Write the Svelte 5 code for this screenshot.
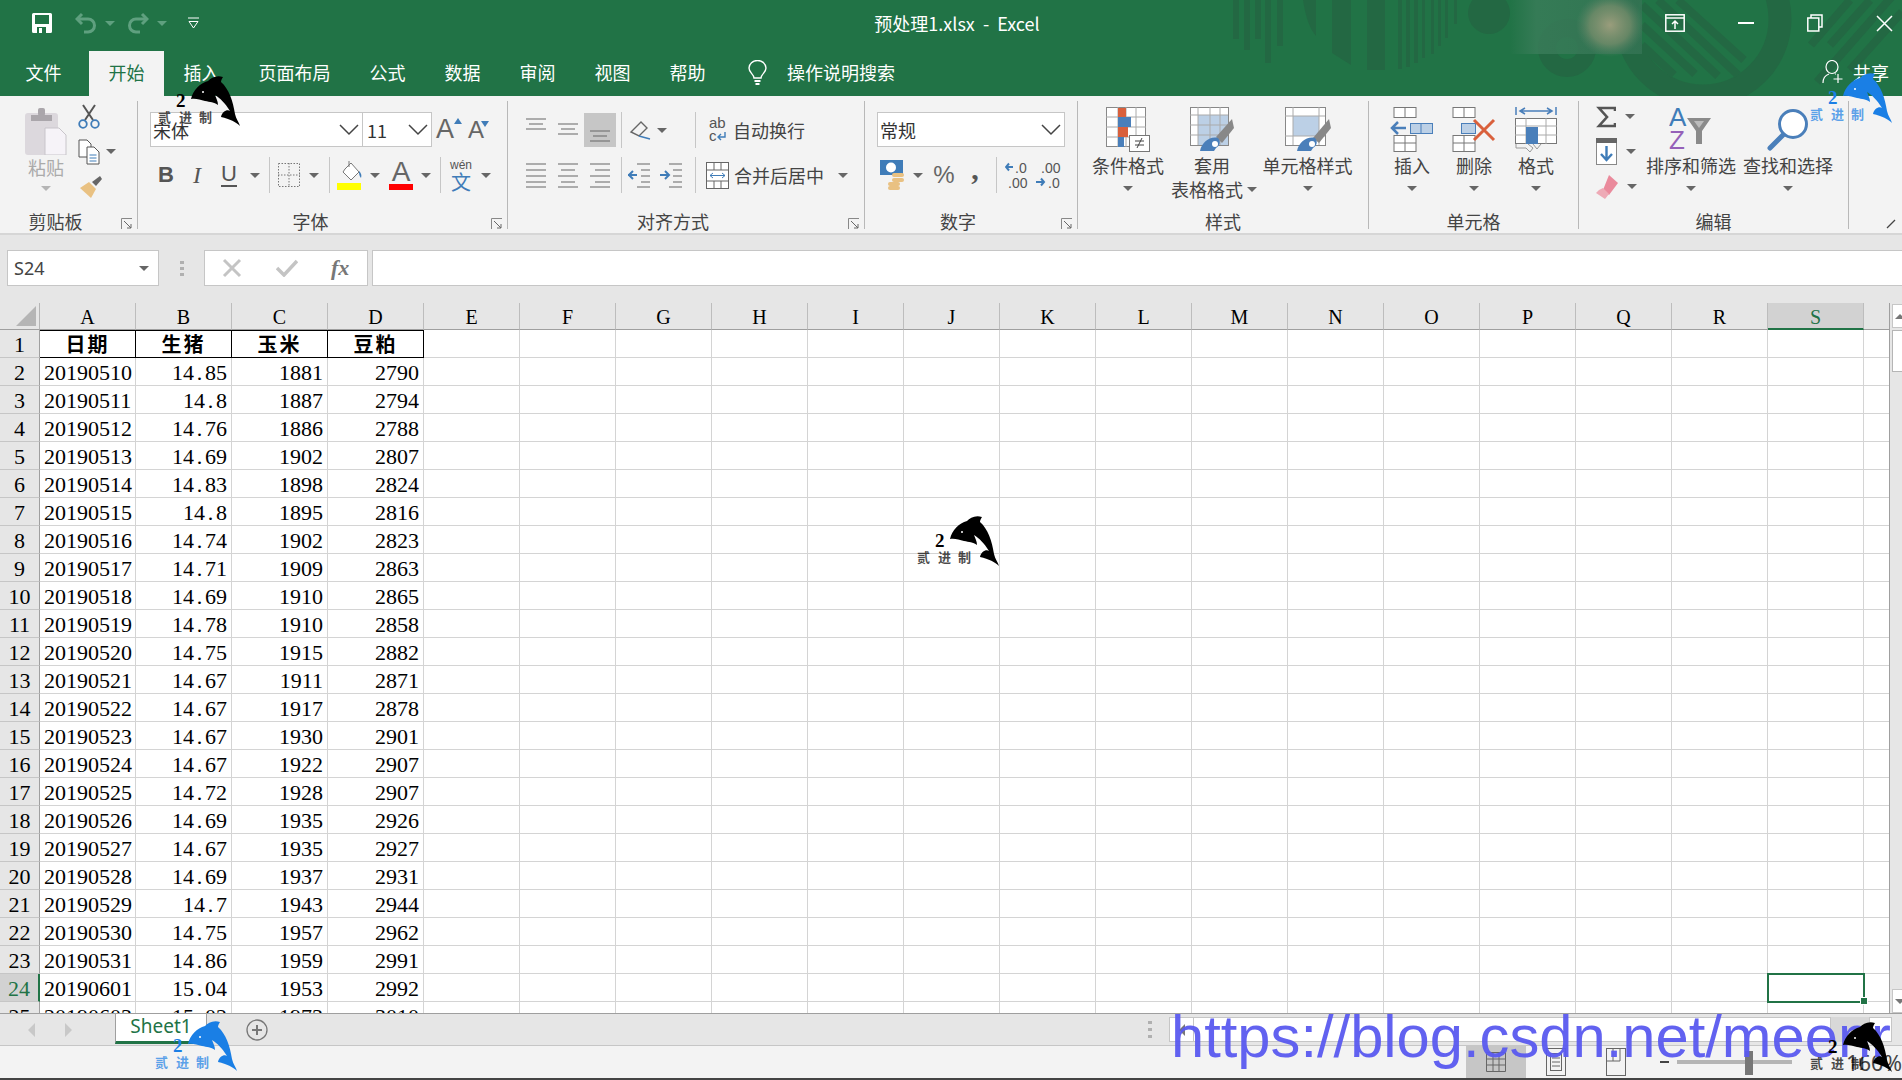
<script>
  const letters = 'ABCDEFGHIJKLMNOPQRS'.split('');
  const head = ['日期', '生猪', '玉米', '豆粕'];
  const data = [
    ['20190510', '14.85', '1881', '2790'],
    ['20190511', '14.8', '1887', '2794'],
    ['20190512', '14.76', '1886', '2788'],
    ['20190513', '14.69', '1902', '2807'],
    ['20190514', '14.83', '1898', '2824'],
    ['20190515', '14.8', '1895', '2816'],
    ['20190516', '14.74', '1902', '2823'],
    ['20190517', '14.71', '1909', '2863'],
    ['20190518', '14.69', '1910', '2865'],
    ['20190519', '14.78', '1910', '2858'],
    ['20190520', '14.75', '1915', '2882'],
    ['20190521', '14.67', '1911', '2871'],
    ['20190522', '14.67', '1917', '2878'],
    ['20190523', '14.67', '1930', '2901'],
    ['20190524', '14.67', '1922', '2907'],
    ['20190525', '14.72', '1928', '2907'],
    ['20190526', '14.69', '1935', '2926'],
    ['20190527', '14.67', '1935', '2927'],
    ['20190528', '14.69', '1937', '2931'],
    ['20190529', '14.7', '1943', '2944'],
    ['20190530', '14.75', '1957', '2962'],
    ['20190531', '14.86', '1959', '2991'],
    ['20190601', '15.04', '1953', '2992'],
    ['20190603', '15.02', '1973', '3010']
  ];
  const blanks = Array.from({ length: 16 });
  const tabs = ['插入', '页面布局', '公式', '数据', '审阅', '视图', '帮助'];
</script>

{#snippet caret()}<i class="caret"></i>{/snippet}

{#snippet chevron()}
  <svg width="20" height="12" viewBox="0 0 20 12"><path d="M1 1l9 9 9-9" fill="none" stroke="#444" stroke-width="1.5"/></svg>
{/snippet}

{#snippet launcher()}
  <svg class="launcher" width="12" height="12" viewBox="0 0 12 12"><path d="M.5 11V.5H11" fill="none" stroke="#888"/><path d="M3 3l7 7M10 6v4H6" fill="none" stroke="#666"/></svg>
{/snippet}

{#snippet lines(kind)}
  <svg width="22" height="26" viewBox="0 0 22 26" fill="none" stroke="#666" stroke-width="1.2">
    {#if kind === 'left'}<path d="M1 2h20M1 8h20M1 14h20M1 20h20M1 25h20"/>
    {:else if kind === 'center'}<path d="M1 2h20M4 8h14M1 14h20M4 20h14M1 25h20"/>
    {:else}<path d="M1 2h20M6 8h15M1 14h20M6 20h15M1 25h20"/>{/if}
  </svg>
{/snippet}

{#snippet mark(cls)}
  <div class="mark {cls}">
    <svg width="82" height="51" viewBox="0 0 82 51">
      <path d="M33 24C35 15 42 8 50 6C53 3 58 0 65 2C64 4 63 5 63 7C71 14 75 26 77 39C78 44 81 47 82 51C78 47 72 44 63 42C64 37 69 34 72 36C67 28 62 23 57 20C58 23 60 26 60 30C56 27 52 27 47 26C42 25 38 23 33 24Z" fill="currentColor"/>
      <circle cx="45" cy="17" r="1" fill="#fff"/>
      <text x="18" y="32" class="two">2</text>
      <text x="0" y="47" class="cn">贰</text>
      <text x="21" y="47" class="cn">进</text>
      <text x="41" y="47" class="cn">制</text>
    </svg>
  </div>
{/snippet}

{#snippet num(v)}
  {@const p = v.split('.')}
  {p[0]}{#if p[1]}<span class="dot">.</span>{p[1]}{/if}
{/snippet}

<div class="excel">
  <header class="top">
    <svg class="decor" width="702" height="96" viewBox="0 0 702 96">
      <defs>
        <linearGradient id="haze" x1="0" x2="1" y1="0" y2="0">
          <stop offset="0" stop-color="#3a7d5a" stop-opacity="0"/>
          <stop offset=".2" stop-color="#3a7d5a"/>
          <stop offset="1" stop-color="#357455"/>
        </linearGradient>
        <radialGradient id="glow">
          <stop offset="0" stop-color="#9a9d7c"/>
          <stop offset=".6" stop-color="#7d8f6e" stop-opacity=".7"/>
          <stop offset="1" stop-color="#5d8568" stop-opacity="0"/>
        </radialGradient>
      </defs>
      <g fill="#236843">
        <rect x="33" width="6" height="39"/><rect x="44" width="6" height="50"/><rect x="55" width="6" height="39"/>
        <rect x="65" width="6" height="63"/><rect x="77" width="6" height="46"/>
        <path d="M103 0h13v36Q107 26 103 0z"/><path d="M132 0h19v65l-19-12z"/><rect x="167" width="18" height="70"/>
        <rect x="198" width="4" height="69"/><rect x="206" width="4" height="67"/><rect x="214" width="4" height="63"/>
        <rect x="222" width="3" height="58"/><rect x="231" width="3" height="54"/><rect x="238" width="3" height="46"/>
        <rect x="245" width="3" height="38"/><rect x="254" width="3" height="24"/>
        <ellipse cx="289" cy="13" rx="21" ry="21"/>
      </g>
      <g fill="none" stroke="#236843">
        <circle cx="367" cy="48" r="20" stroke-width="18"/>
        <circle cx="503" cy="19" r="77" stroke-width="23"/>
        <g stroke-width="8">
          <path d="M458 0l80 75M442 5l76 71M442 25l53 49M442 45l32 30M478 0l66 60"/>
          <path d="M611 45L650 0M630 45L670 0M617 82L702-15M650 70L702 12"/>
        </g>
      </g>
      <rect x="310" width="132" height="54" fill="url(#haze)" opacity=".8"/>
      <ellipse cx="410" cy="25" rx="34" ry="32" fill="url(#glow)"/>
    </svg>

    <div class="titlebar">
      <div class="qat">
        <svg class="save" width="20" height="20" viewBox="0 0 20 20"><path d="M0 1.5A1.5 1.5 0 0 1 1.5 0h17A1.500 1.500 0 0 1 20 1.500v17a1.500 1.500 0 0 1-1.500 1.500h-17A1.500 1.500 0 0 1 0 18.500z" fill="#fff"/><rect x="3" y="2" width="14" height="9" fill="#217346"/><rect x="5" y="14" width="9" height="6" fill="#217346"/><rect x="7" y="15" width="3" height="5" fill="#fff"/></svg>
        <svg class="undo" width="22" height="22" viewBox="0 0 22 22" fill="none" stroke="#5fa07f" stroke-width="3"><path d="M7 2L2 7l5 5"/><path d="M2 7h11a6.500 6.500 0 0 1 0 13H9"/></svg>
        <i class="caret dim"></i>
        <svg class="redo" width="22" height="22" viewBox="0 0 22 22" fill="none" stroke="#5fa07f" stroke-width="3"><path d="M15 2l5 5-5 5"/><path d="M20 7H9a6.500 6.500 0 0 0 0 13h4"/></svg>
        <i class="caret dim"></i>
        <svg class="custom" width="13" height="12" viewBox="0 0 13 12" fill="none" stroke="#fff"><path d="M1 1h11M2 4.500h9L6.500 11z"/></svg>
      </div>
      <div class="doc">预处理1.xlsx&nbsp; - &nbsp;Excel</div>
      <div class="win">
        <svg width="20" height="18" viewBox="0 0 20 18" fill="none" stroke="#fff" stroke-width="1.500"><rect x=".8" y=".8" width="18.400" height="16.400"/><path d="M1 4h18M10 15V7M7 10l3-3 3 3"/></svg>
        <svg width="16" height="2" viewBox="0 0 16 2"><rect width="16" height="2" fill="#fff"/></svg>
        <svg width="16" height="18" viewBox="0 0 16 18" fill="none" stroke="#fff" stroke-width="1.500"><rect x=".8" y="4" width="11" height="13"/><path d="M4 4V1h11v12h-3"/></svg>
        <svg width="17" height="17" viewBox="0 0 17 17" stroke="#fff" stroke-width="1.500"><path d="M1 1l15 15M16 1L1 16"/></svg>
      </div>
    </div>

    <nav class="tabs">
      <span class="tab file">文件</span>
      <span class="tab active">开始</span>
      {#each tabs as t}<span class="tab">{t}</span>{/each}
      <svg class="bulb" width="19" height="25" viewBox="0 0 19 25" fill="none" stroke="#fff" stroke-width="1.400"><path d="M6 18c0-4-5-5-5-10a8.500 7.500 0 0 1 17 0c0 5-5 6-5 10z"/><path d="M6.500 21h6M7.500 24h4" stroke-width="1.800"/></svg>
      <span class="search">操作说明搜索</span>
      <div class="share">
        <svg width="22" height="24" viewBox="0 0 22 24" fill="none" stroke="#fff" stroke-width="1.200"><ellipse cx="10" cy="7" rx="6" ry="6.500"/><path d="M1 23c0-5 3-8 6-9M13 14h1M16 14v9M11.500 19h9"/></svg>
        <span>共享</span>
      </div>
    </nav>
  </header>

  <section class="ribbon">
    <div class="group g1">
      <div class="body clip">
        <div class="paste">
          <svg width="42" height="48" viewBox="0 0 42 48">
            <rect y="6" width="33" height="42" rx="3" fill="#dcd8dd"/>
            <path d="M6 8h21v6H6z" fill="#aaa6ab"/><rect x="13" y="1" width="7" height="8" rx="2" fill="#aaa6ab"/>
            <path d="M20 21h14l7 7v20H20z" fill="#f6f3f8" stroke="#c8c5ca"/>
          </svg>
          <span class="lbl disabled">粘贴</span>
          <i class="caret light"></i>
        </div>
        <div class="smalls">
          <div class="small">
            <svg width="22" height="26" viewBox="0 0 22 26" fill="none"><path d="M5 1l10 15M17 1L7 16" stroke="#555" stroke-width="2"/><circle cx="5" cy="20" r="3.800" stroke="#3f7cb8" stroke-width="1.800"/><circle cx="17" cy="20" r="3.800" stroke="#3f7cb8" stroke-width="1.800"/></svg>
          </div>
          <div class="small">
            <svg width="22" height="26" viewBox="0 0 22 26" fill="#fff" stroke="#555"><path d="M1 1h8l4 4v13H1z"/><path d="M9 8h7l5 5v12H9z"/><path d="M11.500 16h7M11.500 19h7M11.500 22h7" stroke="#3f7cb8"/></svg>
            <i class="caret"></i>
          </div>
          <div class="small">
            <svg width="24" height="24" viewBox="0 0 24 24"><path d="M14 7l8-6 2 3-6 7z" fill="#666"/><path d="M2 13l9-6 7 7-5 9z" fill="#e9c182"/></svg>
          </div>
        </div>
      </div>
      <div class="label">剪贴板</div>
      {@render launcher()}
    </div>

    <div class="group g2">
      <div class="body">
        <div class="row1 r-font">
          <div class="select font"><span>宋体</span>{@render chevron()}</div>
          <div class="select size"><span>11</span>{@render chevron()}</div>
          <span class="grow">A<svg width="8" height="6" viewBox="0 0 8 6"><path d="M4 0l4 6H0z" fill="#3f7cb8"/></svg></span>
          <span class="shrink">A<svg width="8" height="6" viewBox="0 0 8 6"><path d="M0 0h8L4 6z" fill="#3f7cb8"/></svg></span>
        </div>
        <div class="row2 r-fmt">
          <span class="b">B</span><span class="it">I</span><span class="u">U</span>{@render caret()}
          <i class="sep"></i>
          <svg width="22" height="24" viewBox="0 0 22 24" fill="none" stroke="#777" stroke-dasharray="1.500 1.500"><rect x=".5" y=".5" width="21" height="23"/><path d="M11 0v24M0 12h22"/></svg>
          {@render caret()}
          <i class="sep"></i>
          <svg width="26" height="30" viewBox="0 0 26 30"><path d="M8 9l6-6 8 9-8 8-8-8z" fill="#fff" stroke="#777"/><path d="M12 1v6" stroke="#777"/><path d="M22 11c2 2 3 4 2 7-2-2-2-5-2-7z" fill="#3f7cb8"/><rect x="0" y="23" width="24" height="7" fill="#ff0"/></svg>
          {@render caret()}
          <div class="colA"><span>A</span><i></i></div>
          {@render caret()}
          <i class="sep"></i>
          <div class="wen"><span>wén</span><b>文</b></div>
          {@render caret()}
        </div>
      </div>
      <div class="label">字体</div>
      {@render launcher()}
    </div>

    <div class="group g3">
      <div class="body">
        <div class="row1 r-al1">
          <svg width="20" height="14" viewBox="0 0 20 14" class="up" stroke="#666" stroke-width="1.200"><path d="M0 1h20M3 6h14M0 11h20"/></svg>
          <svg width="20" height="14" viewBox="0 0 20 14" stroke="#666" stroke-width="1.200"><path d="M0 1h20M3 6h14M0 11h20"/></svg>
          <div class="hl"><svg width="20" height="14" viewBox="0 0 20 14" stroke="#666" stroke-width="1.200"><path d="M0 1h20M3 6h14M0 11h20"/></svg></div>
          <i class="sep"></i>
          <svg width="24" height="22" viewBox="0 0 24 22" fill="none" stroke="#666" stroke-width="1.400"><path d="M2 13L12 3l6 6-8 8z"/><path d="M10 17l11 3" stroke="#3f7cb8"/></svg>
          {@render caret()}
          <span></span>
          <i class="sep"></i>
          <div class="cmd wrap">
            <svg width="18" height="26" viewBox="0 0 18 26"><text x="0" y="11" class="ab">ab</text><text x="0" y="24" class="ab">c</text><path d="M16 15v5h-6M12 17l-3 3 3 3" fill="none" stroke="#3f7cb8" stroke-width="1.400"/></svg>
            <span>自动换行</span>
          </div>
        </div>
        <div class="row2 r-al2">
          {@render lines('left')}
          {@render lines('center')}
          {@render lines('right')}
          <i class="sep"></i>
          <svg width="22" height="26" viewBox="0 0 22 26" fill="none" stroke="#666" stroke-width="1.200"><path d="M9 2h13M13 8h9M13 14h9M13 20h9M9 25h13"/><path d="M0 13h9M5 9l-4 4 4 4" stroke="#3f7cb8" stroke-width="2"/></svg>
          <svg width="22" height="26" viewBox="0 0 22 26" fill="none" stroke="#666" stroke-width="1.200"><path d="M9 2h13M13 8h9M13 14h9M13 20h9M9 25h13"/><path d="M0 13h9M5 9l4 4-4 4" stroke="#3f7cb8" stroke-width="2"/></svg>
          <i class="sep"></i>
          <div class="cmd merge">
            <svg width="23" height="27" viewBox="0 0 23 27" fill="#fff" stroke="#666"><rect x=".5" y=".5" width="22" height="26"/><path d="M0 8h23M0 19h23M8 0v8M15 0v8M8 19v8M15 19v8"/><path d="M4 13.500h15M7 11l-3 2.500L7 16M16 11l3 2.500L16 16" fill="none" stroke="#3f7cb8"/></svg>
            <span>合并后居中</span>
            {@render caret()}
          </div>
        </div>
      </div>
      <div class="label">对齐方式</div>
      {@render launcher()}
    </div>

    <div class="group g4">
      <div class="body">
        <div class="row1 r-num"><div class="select general"><span>常规</span>{@render chevron()}</div></div>
        <div class="row2 r-nf">
          <svg width="25" height="30" viewBox="0 0 25 30"><rect width="23" height="15" fill="#3f7cb8"/><ellipse cx="11" cy="7.500" rx="5" ry="5" fill="#fff"/><g fill="#e9c182"><rect x="12" y="13" width="12" height="4" rx="2"/><rect x="12" y="18" width="12" height="4" rx="2"/><rect x="8" y="22" width="12" height="4" rx="2"/><rect x="8" y="26" width="12" height="4" rx="2"/></g></svg>
          {@render caret()}
          <span class="pct">%</span>
          <span class="comma">,</span>
          <i class="sep"></i>
          <svg width="56" height="30" viewBox="0 0 56 30">
            <text x="10" y="13" class="dec">.0</text><text x="3" y="28" class="dec">.00</text>
            <path d="M1 7h7M4 3.500L1 7l3 3.500" fill="none" stroke="#3f7cb8" stroke-width="2"/>
            <text x="36" y="13" class="dec">.00</text><text x="43" y="28" class="dec">.0</text>
            <path d="M31 22h8M36 18.500l3 3.500-3 3.500" fill="none" stroke="#3f7cb8" stroke-width="2"/>
          </svg>
        </div>
      </div>
      <div class="label">数字</div>
      {@render launcher()}
    </div>

    <div class="group g5">
      <div class="body bigs">
        <div class="big w72">
          <svg width="44" height="45" viewBox="0 0 44 45">
            <rect x=".5" y=".5" width="39" height="39" fill="#fff" stroke="#888"/>
            <path d="M0 10h40M0 20h40M0 30h40M12 0v40M20 0v40M30 0v40" stroke="#aaa"/>
            <rect x="12" y="1" width="8" height="9" fill="#d9603c"/><rect x="12" y="10" width="13" height="10" fill="#4a7fba"/>
            <rect x="12" y="20" width="10" height="10" fill="#d9603c"/><rect x="12" y="30" width="6" height="10" fill="#4a7fba"/>
            <rect x="23.500" y="28.500" width="20" height="16" fill="#fff" stroke="#777"/>
            <path d="M29 34h9M29 38h9M36 31l-5 10" stroke="#444" fill="none"/>
          </svg>
          <span class="lbl">条件格式</span>
          <i class="caret"></i>
        </div>
        <div class="big w72 table">
          <svg class="shifted" width="44" height="45" viewBox="0 0 44 45">
            <rect x=".5" y=".5" width="38" height="38" fill="#fff" stroke="#888"/>
            <rect x="8" y="8" width="30" height="30" fill="#bcd0e6"/>
            <path d="M0 8h38M0 18h38M0 28h38M8 0v38M20 0v38M30 0v38" stroke="#aaa"/>
            <path d="M26 30L42 12l2 9-12 15z" fill="#888"/>
            <path d="M10 44c2-9 10-15 18-13 3 3 2 8-2 10l-2 3z" fill="#4a7fba"/><circle cx="25" cy="37" r="3" fill="#fff"/>
          </svg>
          <span class="lbl shifted">套用</span>
          <span class="lbl withcaret">表格格式<i class="caret"></i></span>
        </div>
        <div class="big w91 style">
          <svg width="46" height="45" viewBox="0 0 46 45">
            <rect x=".5" y=".5" width="40" height="38" fill="#fff" stroke="#888"/>
            <rect x="8" y="9" width="26" height="20" fill="#bcd0e6"/>
            <path d="M0 9h40M0 29h40M8 0v38M34 0v38" stroke="#aaa"/>
            <path d="M28 31L44 12l2 9-12 15z" fill="#888"/>
            <path d="M12 44c2-9 10-15 18-13 3 3 2 8-2 10l-2 3z" fill="#4a7fba"/><circle cx="27" cy="37" r="3" fill="#fff"/>
          </svg>
          <span class="lbl">单元格样式</span>
          <i class="caret"></i>
        </div>
      </div>
      <div class="label">样式</div>
    </div>

    <div class="group g6">
      <div class="body bigs">
        <div class="big w62">
          <svg width="44" height="45" viewBox="0 0 44 45" fill="#fff" stroke="#777">
            <rect x="4" y=".5" width="22" height="10"/><path d="M15 0v10"/>
            <rect x="20.500" y="16.500" width="22" height="10" fill="#bcd0e6" stroke="#4a7fba"/><path d="M31 16v10" stroke="#4a7fba"/>
            <rect x="4" y="28.500" width="22" height="16"/><path d="M15 28v16M4 36h22"/>
            <path d="M2 21h14M8 15l-6 6 6 6" fill="none" stroke="#4a7fba" stroke-width="2.500"/>
          </svg>
          <span class="lbl">插入</span>
          <i class="caret"></i>
        </div>
        <div class="big w62">
          <svg width="44" height="45" viewBox="0 0 44 45" fill="#fff" stroke="#777">
            <rect x="1" y=".5" width="22" height="10"/><path d="M12 0v10"/>
            <rect x="9.500" y="16.500" width="14" height="10" fill="#bcd0e6" stroke="#4a7fba"/>
            <rect x="1" y="28.500" width="22" height="16"/><path d="M12 28v16M1 36h22"/>
            <path d="M22 13l20 20M42 13L22 33" fill="none" stroke="#d9603c" stroke-width="3"/>
          </svg>
          <span class="lbl">删除</span>
          <i class="caret"></i>
        </div>
        <div class="big w62">
          <svg width="42" height="45" viewBox="0 0 42 45" fill="none">
            <path d="M1 0v8M41 0v8M5 4h32M10 1L5 4l5 3M32 1l5 3-5 3" stroke="#4a7fba" stroke-width="1.500"/>
            <rect x=".5" y="11.500" width="41" height="25" fill="#fff" stroke="#777"/>
            <path d="M0 19h42M0 28h42M11 11v26M31 11v26" stroke="#aaa"/>
            <rect x="11" y="20" width="12" height="17" fill="#4a7fba"/>
            <path d="M1 37v4h10l4 4 3-4-5-4M18 37l4 5 4-5" stroke="#999"/>
          </svg>
          <span class="lbl">格式</span>
          <i class="caret"></i>
        </div>
      </div>
      <div class="label">单元格</div>
    </div>

    <div class="group g7">
      <div class="body bigs">
        <div class="smalls edit">
          <div class="small">
            <svg width="20" height="22" viewBox="0 0 20 22" fill="none" stroke="#555" stroke-width="2.600"><path d="M19 5V2H3l8 9-8 9h16v-3"/></svg>
            <i class="caret"></i>
          </div>
          <div class="small">
            <svg width="21" height="27" viewBox="0 0 21 27"><rect x=".5" y=".5" width="20" height="26" fill="#fff" stroke="#888"/><rect width="21" height="5" fill="#666"/><path d="M10.500 8v13M5 16l5.500 6L16 16" fill="none" stroke="#3f7cb8" stroke-width="2.400"/></svg>
            <i class="caret"></i>
          </div>
          <div class="small">
            <svg width="22" height="24" viewBox="0 0 22 24"><path d="M13 0l9 8-9 12-6-5z" fill="#ea8a9c"/><path d="M7 13l6 6-4 5-9-6 3-3z" fill="#eeaab6"/></svg>
            <i class="caret"></i>
          </div>
        </div>
        <div class="big w90 sort">
          <svg width="44" height="45" viewBox="0 0 44 45">
            <text x="0" y="19" class="az a">A</text><text x="0" y="42" class="az z">Z</text>
            <path d="M18 11h24l-9 13v13h-6V24z" fill="#8a8a8a"/><path d="M25 14h10l-5 7z" fill="#bbb"/>
          </svg>
          <span class="lbl">排序和筛选</span>
          <i class="caret"></i>
        </div>
        <div class="big w90 find">
          <svg width="42" height="45" viewBox="0 0 42 45" fill="none">
            <circle cx="26" cy="17" r="13.500" fill="#fff" stroke="#4a7fba" stroke-width="3"/>
            <path d="M16 28L3 41" stroke="#4a7fba" stroke-width="5" stroke-linecap="round"/>
          </svg>
          <span class="lbl">查找和选择</span>
          <i class="caret"></i>
        </div>
      </div>
      <div class="label">编辑</div>
    </div>

    <svg class="collapse" width="14" height="10" viewBox="0 0 14 10"><path d="M1 9l8-8" fill="none" stroke="#444" stroke-width="1.300"/></svg>
  </section>

  <section class="formula">
    <div class="namebox"><span>S24</span><i class="caret"></i></div>
    <div class="grip"><i></i><i></i><i></i></div>
    <div class="fxbox">
      <svg width="20" height="20" viewBox="0 0 20 20" stroke="#c4c4c4" stroke-width="3"><path d="M2 2l16 16M18 2L2 18"/></svg>
      <svg width="22" height="18" viewBox="0 0 22 18" fill="none" stroke="#c4c4c4" stroke-width="3.500"><path d="M1 9l7 7L21 2"/></svg>
      <span class="fx">fx</span>
    </div>
    <div class="input"></div>
  </section>

  <section class="sheetarea">
    <div class="grid">
      <div class="corner"><i></i></div>
      {#each letters as l}
        <div class="colh" class:current={l === 'S'}>{l}</div>
      {/each}
      <div class="colh last"></div>

      <div class="rowh">1</div>
      {#each head as h}<div class="cell title">{h}</div>{/each}
      {#each blanks as _}<div class="cell"></div>{/each}

      {#each data as row, i}
        <div class="rowh" class:current={i === 22}>{i + 2}</div>
        <div class="cell txt">{row[0]}</div>
        <div class="cell txt right">{@render num(row[1])}</div>
        <div class="cell txt right">{row[2]}</div>
        <div class="cell txt right">{row[3]}</div>
        {#each blanks as _, j}
          <div class="cell" class:selected={i === 22 && j === 14}></div>
        {/each}
      {/each}
    </div>
    <div class="vscroll">
      <div class="sbtn"><i class="up"></i></div>
      <div class="thumb"></div>
      <div class="track"></div>
      <div class="sbtn"><i class="down"></i></div>
    </div>
  </section>

  <section class="sheetbar">
    <svg class="arrows" width="44" height="14" viewBox="0 0 44 14" fill="#c8c8c8"><path d="M7 0v14L0 7zM37 0v14l7-7z"/></svg>
    <div class="sheettab">Sheet1</div>
    <svg class="add" width="22" height="22" viewBox="0 0 22 22" fill="none" stroke="#777" stroke-width="1.300"><circle cx="11" cy="11" r="10"/><path d="M11 6v10M6 11h10" stroke-width="2"/></svg>
    <div class="bargrip"><i></i><i></i><i></i></div>
    <div class="hscroll">
      <div class="hbtn"><i></i></div>
      <div class="htrack"></div>
      <div class="hthumb"></div>
      <div class="hend"></div>
    </div>
  </section>

  <footer class="status">
    <div class="views">
      <div class="view on"><svg width="20" height="20" viewBox="0 0 20 20" fill="none" stroke="#666"><path d="M.5.500h19v19H.5zM7 0v20M13 0v20M0 7h20M0 13h20"/></svg></div>
      <div class="view"><svg width="20" height="28" viewBox="0 0 20 28" fill="none" stroke="#666"><rect x=".5" y=".5" width="19" height="27"/><rect x="4.500" y="5.500" width="11" height="17"/><path d="M6 10h8M6 14h8M6 18h8"/></svg></div>
      <div class="view"><svg width="20" height="28" viewBox="0 0 20 28" fill="none" stroke="#666"><rect x=".5" y=".5" width="19" height="27"/><path d="M0 13h14M14 0v13M7 0v13"/></svg></div>
    </div>
    <div class="zoomer">
      <i class="minus"></i>
      <div class="slider"><i></i></div>
      <span class="zoomval">160%</span>
    </div>
  </footer>

  <div class="url">https://blog.csdn.net/meenr</div>
  {@render mark('m-title')}
  {@render mark('m-share')}
  {@render mark('m-center')}
  {@render mark('m-tab')}
  {@render mark('m-status')}
</div>

<style>
  :global(body) {
    margin: 0;
    background: #fff;
  }

  .excel {
    position: relative;
    width: 1902px;
    height: 1080px;
    overflow: hidden;
    background: #f3f3f3;
    color: #444;
    font-family: "Noto Sans CJK SC", "Noto Sans", sans-serif;
    font-size: 18px;
  }

  i {
    display: block;
    font-style: normal;
  }

  .top {
    position: relative;
    height: 96px;
    background: #217346;
    color: #fff;
    overflow: hidden;
  }

  .decor {
    position: absolute;
    left: 1200px;
    top: 0;
  }

  .titlebar {
    position: relative;
    height: 50px;
    box-sizing: border-box;
    padding-bottom: 4px;
    display: grid;
    grid-template-columns: 1fr auto 1fr;
    align-items: center;
  }

  .qat {
    display: flex;
    align-items: center;
    padding-left: 32px;
  }

  .qat .undo { margin-left: 23px; }
  .qat .redo { margin-left: 12px; }
  .qat .caret { margin-left: 8px; }
  .qat .custom { margin-left: 20px; }

  .doc {
    padding-left: 12px;
    font-size: 18px;
    line-height: 46px;
    white-space: nowrap;
  }

  .win {
    display: flex;
    align-items: center;
    justify-content: flex-end;
    padding-right: 9px;
  }

  .win svg:nth-child(1) { margin-right: 53px; }
  .win svg:nth-child(2) { margin-right: 53px; }
  .win svg:nth-child(3) { margin-right: 53px; }

  .tabs {
    position: relative;
    height: 46px;
    display: flex;
    align-items: center;
    padding-left: 6px;
  }

  .tab {
    padding: 0 19.5px;
    line-height: 43px;
    height: 45px;
    margin-top: 1px;
    white-space: nowrap;
  }

  .tab.file { margin-right: 8px; }

  .tab.active {
    background: #f3f3f3;
    color: #217346;
  }

  .bulb { margin-left: 23px; margin-top: -2px; }
  .search { margin-left: 20px; margin-top: -2px; }

  .share {
    margin-left: auto;
    display: flex;
    align-items: center;
    gap: 9px;
    padding-right: 13px;
    margin-top: -2px;
  }

  .ribbon {
    position: relative;
    display: flex;
    height: 139px;
    box-sizing: border-box;
    padding-top: 5px;
    background: #f3f3f3;
    border-bottom: 2px solid #d6d6d6;
  }

  .group {
    position: relative;
    box-sizing: border-box;
    height: 128px;
    border-right: 1px solid #b8b8b8;
    flex: none;
  }

  .g1 { width: 138px; }
  .g2 { width: 370px; }
  .g3 { width: 357px; }
  .g4 { width: 213px; }
  .g5 { width: 291px; }
  .g6 { width: 210px; }
  .g7 { width: 270px; }

  .body {
    height: 108px;
    display: flow-root;
  }

  .label {
    height: 20px;
    line-height: 24px;
    text-align: center;
    white-space: nowrap;
    color: #444;
  }

  .g1 .label { padding-right: 26px; }
  .g2 .label { padding-right: 24px; }
  .g3 .label { padding-right: 26px; }
  .g4 .label { padding-right: 26px; }

  .launcher {
    position: absolute;
    right: 4px;
    bottom: -1px;
  }

  .clip {
    display: flex;
  }

  .paste {
    width: 42px;
    margin: 6px 0 0 25px;
    display: flex;
    flex-direction: column;
    align-items: center;
  }

  .lbl {
    line-height: 24px;
    white-space: nowrap;
    color: #444;
  }

  .lbl.disabled { color: #aaa; }

  .paste .caret { margin-top: 7px; }

  .smalls {
    margin: -2px 0 0 11px;
    display: flex;
    flex-direction: column;
  }

  .small {
    height: 35px;
    display: flex;
    align-items: center;
    gap: 6px;
  }

  .caret {
    width: 0;
    height: 0;
    flex: none;
    border-left: 5px solid transparent;
    border-right: 5px solid transparent;
    border-top: 5px solid #666;
  }

  .caret.dim { border-top-color: #5fa07f; }
  .caret.light { border-top-color: #b5b5b5; }

  .sep {
    width: 1px;
    height: 36px;
    background: #c6c6c6;
  }

  .row1 {
    height: 35px;
    margin-top: 11px;
    align-items: center;
  }

  .row2 {
    height: 36px;
    margin-top: 10px;
    display: grid;
    justify-items: center;
    align-items: center;
  }

  .r-font {
    display: flex;
    padding-left: 12px;
  }

  .select {
    box-sizing: border-box;
    height: 35px;
    background: #fff;
    border: 1px solid #c6c6c6;
    display: flex;
    align-items: center;
    justify-content: space-between;
    padding: 0 3px 0 2px;
    color: #333;
  }

  .select.font { width: 213px; }
  .select.size { width: 69px; border-left: 0; padding-left: 4px; }

  .grow, .shrink {
    position: relative;
    display: block;
    font-family: "Liberation Sans", sans-serif;
    color: #666;
  }

  .grow { font-size: 27px; margin-left: 4px; width: 32px; }
  .shrink { font-size: 24px; width: 24px; }

  .grow svg, .shrink svg {
    position: absolute;
    left: 18px;
    top: 4px;
  }

  .shrink svg { left: 13px; top: 5px; }

  .r-fmt {
    padding-left: 12px;
    grid-template-columns: 32px 30px 34px 18px 10px 30px 20px 10px 32px 18px 34px 16px 12px 30px 20px;
  }

  .b { font: bold 22px "Liberation Sans", sans-serif; color: #555; }
  .it { font: italic 24px "Liberation Serif", serif; color: #555; }
  .u {
    font: 22px/22px "Liberation Sans", sans-serif;
    color: #555;
    border-bottom: 2px solid #555;
  }

  .colA {
    width: 24px;
    text-align: center;
    font: 28px/24px "Liberation Sans", sans-serif;
    color: #666;
  }

  .colA i {
    height: 6px;
    background: #f00;
  }

  .wen {
    display: flex;
    flex-direction: column;
    align-items: center;
    color: #555;
  }

  .wen span {
    font: 12px/13px "Liberation Sans", sans-serif;
  }

  .wen b {
    font-weight: 400;
    font-size: 20px;
    line-height: 20px;
    color: #3f7cb8;
  }

  .r-al1 {
    display: grid;
    padding-left: 12px;
    grid-template-columns: 32px 32px 32px 10px 30px 12px 22px 10px 1fr;
    justify-items: center;
    align-items: center;
  }

  .r-al1 .up { margin-bottom: 10px; }

  .hl {
    width: 32px;
    height: 34px;
    background: #c6c6c6;
    display: flex;
    align-items: flex-end;
    justify-content: center;
  }

  .hl svg { margin-bottom: 3px; }

  .r-al2 {
    padding-left: 12px;
    grid-template-columns: 32px 32px 32px 10px 26px 38px 10px 1fr;
  }

  .cmd {
    justify-self: start;
    display: flex;
    align-items: center;
    white-space: nowrap;
  }

  .wrap { padding-left: 9px; gap: 6px; }
  .merge { padding-left: 6px; gap: 5px; }
  .merge .caret { margin-left: 9px; }

  .ab {
    font: 15px "Liberation Sans", sans-serif;
    fill: #555;
  }

  .r-num { padding-left: 12px; }

  .select.general { width: 188px; }

  .r-nf {
    padding-left: 12px;
    grid-template-columns: 30px 22px 30px 32px 10px 64px;
  }

  .pct {
    font: 24px "Liberation Sans", sans-serif;
    color: #666;
  }

  .comma {
    font: bold 30px/20px "Liberation Serif", serif;
    color: #555;
    padding-bottom: 12px;
  }

  .dec {
    font: 14px "Liberation Sans", sans-serif;
    fill: #555;
  }

  .bigs {
    display: flex;
  }

  .big {
    display: flex;
    flex-direction: column;
    align-items: center;
    padding-top: 6px;
    flex: none;
  }

  .big svg { height: 45px; flex: none; margin-bottom: 1px; }
  .big > .caret { margin-top: 9px; }

  .w72 { width: 72px; }
  .w91 { width: 91px; }
  .w62 { width: 62px; }
  .w90 { width: 90px; }

  .g5 .big:first-child { margin-left: 14px; }
  .table { margin-left: 7px; }
  .style { margin-left: 19px; }

  .shifted { margin-left: 10px; }

  .g6 .bigs { padding-left: 12px; }

  .withcaret {
    position: relative;
  }

  .withcaret .caret {
    position: absolute;
    right: -14px;
    top: 10px;
  }

  .smalls.edit {
    width: 50px;
    margin: -2px 0 0 17px;
    flex: none;
  }

  .edit .small { gap: 9px; }

  .find { margin-left: 7px; }

  .az {
    font: 26px "Liberation Sans", sans-serif;
  }

  .az.a { fill: #3f7cb8; }
  .az.z { fill: #9560b8; }

  .collapse {
    position: absolute;
    right: 2px;
    bottom: 4px;
  }

  .formula {
    height: 68px;
    box-sizing: border-box;
    padding-top: 15px;
    background: #e6e6e6;
    display: flex;
    align-items: flex-start;
  }

  .namebox {
    box-sizing: border-box;
    width: 152px;
    height: 36px;
    margin-left: 7px;
    background: #fff;
    border: 1px solid #c6c6c6;
    display: flex;
    align-items: center;
    justify-content: space-between;
    padding: 0 9px 0 6px;
    font: 18px "Noto Sans", sans-serif;
  }

  .grip {
    width: 45px;
    height: 36px;
    display: flex;
    flex-direction: column;
    align-items: center;
    justify-content: center;
    gap: 3px;
  }

  .grip i, .bargrip i {
    width: 4px;
    height: 3px;
    background: #b0b0b0;
  }

  .fxbox {
    box-sizing: border-box;
    width: 164px;
    height: 36px;
    background: #fff;
    border: 1px solid #c6c6c6;
    display: flex;
    align-items: center;
    padding-left: 17px;
    gap: 34px;
  }

  .fx {
    font: italic bold 22px "Liberation Serif", serif;
    color: #777;
    margin-left: -1px;
  }

  .input {
    flex: 1;
    height: 36px;
    box-sizing: border-box;
    margin-left: 4px;
    background: #fff;
    border: 1px solid #c6c6c6;
    border-right: 0;
  }

  .sheetarea {
    display: flex;
    height: 710px;
    background: #e6e6e6;
    overflow: hidden;
  }

  .grid {
    width: 1890px;
    flex: none;
    background: #fff;
    display: grid;
    grid-template-columns: 40px repeat(19, 96px) 26px;
    grid-auto-rows: 28px;
    grid-template-rows: 27px;
    align-content: start;
    overflow: hidden;
    margin-right: 2px;
    border-right: 1px solid #9f9f9f;
    box-sizing: border-box;
    font-family: "Liberation Serif", "Noto Sans CJK SC", serif;
    color: #000;
  }

  .corner {
    background: #e6e6e6;
    box-sizing: border-box;
    border-right: 1px solid #b5b5b5;
    border-bottom: 1px solid #9f9f9f;
    height: 27px;
    display: flex;
    justify-content: flex-end;
    align-items: flex-end;
    padding: 0 3px 3px 0;
  }

  .corner i {
    width: 0;
    height: 0;
    border-left: 20px solid transparent;
    border-bottom: 20px solid #b5b5b5;
  }

  .colh {
    box-sizing: border-box;
    background: #e6e6e6;
    border-right: 1px solid #bdbdbd;
    border-bottom: 1px solid #9f9f9f;
    text-align: center;
    font-size: 20px;
    line-height: 29px;
  }

  .colh.current {
    background: #d2d2d2;
    color: #217346;
    border-bottom: 2px solid #217346;
  }

  .colh.last {
    border-right: 0;
  }

  .rowh {
    box-sizing: border-box;
    background: #e6e6e6;
    border-right: 1px solid #9f9f9f;
    border-bottom: 1px solid #c6c6c6;
    text-align: center;
    font-size: 22px;
    line-height: 30px;
  }

  .rowh.current {
    background: #d2d2d2;
    color: #217346;
    border-right: 2px solid #217346;
  }

  .cell {
    box-sizing: border-box;
    border-right: 1px solid #d4d4d4;
    border-bottom: 1px solid #d4d4d4;
    position: relative;
    white-space: nowrap;
  }

  .txt {
    font-size: 22px;
    line-height: 30px;
    padding: 0 4px;
  }

  .right { text-align: right; }

  .dot {
    display: inline-block;
    width: 11px;
    text-align: center;
  }

  .title {
    border-right: 1px solid #000;
    border-bottom: 1px solid #000;
    box-shadow: inset 0 1px 0 #000;
    font: bold 20px/28px "Noto Sans CJK SC", sans-serif;
    letter-spacing: 2px;
    text-align: center;
    color: #000;
  }

  .selected {
    outline: 2px solid #217346;
    outline-offset: -1px;
    z-index: 2;
  }

  .selected::after {
    content: "";
    position: absolute;
    right: -4px;
    bottom: -3px;
    width: 6px;
    height: 6px;
    background: #217346;
    outline: 1px solid #fff;
  }

  .vscroll {
    width: 10px;
    flex: none;
    display: flex;
    flex-direction: column;
    margin-top: 1px;
  }

  .sbtn {
    height: 24px;
    background: #fff;
    border: 1px solid #c6c6c6;
    border-right: 0;
    box-sizing: border-box;
    display: flex;
    align-items: center;
    padding-left: 2px;
  }

  .sbtn i {
    border-left: 5px solid transparent;
    border-right: 5px solid transparent;
  }

  .sbtn .up { border-bottom: 5px solid #777; }
  .sbtn .down { border-top: 5px solid #777; }

  .thumb {
    height: 42px;
    margin-top: 2px;
    background: #fff;
    border: 1px solid #b5b5b5;
    border-right: 0;
    box-sizing: border-box;
  }

  .track { flex: 1; }

  .sheetbar {
    height: 33px;
    box-sizing: border-box;
    background: #e6e6e6;
    border-top: 1px solid #9f9f9f;
    border-bottom: 1px solid #c6c6c6;
    display: flex;
    align-items: center;
  }

  .arrows { margin-left: 28px; flex: none; }

  .sheettab {
    box-sizing: border-box;
    width: 92px;
    height: 30px;
    margin-left: 43px;
    align-self: flex-start;
    background: #fff;
    border-left: 1px solid #9f9f9f;
    border-right: 1px solid #9f9f9f;
    border-bottom: 3px solid #217346;
    color: #217346;
    font-size: 19px;
    line-height: 24px;
    text-align: center;
    font-family: "Noto Sans", sans-serif;
  }

  .add { margin-left: 39px; flex: none; }

  .bargrip {
    margin-left: 880px;
    display: flex;
    flex-direction: column;
    gap: 4px;
  }

  .hscroll {
    margin-left: 17px;
    width: 723px;
    height: 25px;
    display: flex;
    flex: none;
  }

  .hbtn {
    width: 25px;
    background: #fff;
    box-sizing: border-box;
    border: 1px solid #c6c6c6;
    display: flex;
    align-items: center;
    justify-content: center;
  }

  .hbtn i {
    border-top: 6px solid transparent;
    border-bottom: 6px solid transparent;
    border-right: 6px solid #777;
  }

  .htrack {
    width: 637px;
    background: #fff;
    box-sizing: border-box;
    border: 1px solid #c6c6c6;
    border-left: 0;
  }

  .hthumb { width: 38px; background: #d8d8d8; }

  .hend {
    width: 23px;
    background: #fff;
    box-sizing: border-box;
    border: 1px solid #c6c6c6;
  }

  .status {
    height: 34px;
    box-sizing: border-box;
    background: #f3f3f3;
    border-bottom: 2px solid #444;
    display: flex;
    align-items: stretch;
  }

  .views {
    margin-left: 1466px;
    display: flex;
  }

  .view {
    width: 60px;
    display: flex;
    align-items: center;
    justify-content: center;
  }

  .view.on { background: #c6c6c6; }

  .zoomer {
    display: flex;
    align-items: center;
    margin-left: 14px;
    flex: 1;
    min-width: 0;
  }

  .minus {
    width: 11px;
    height: 2px;
    background: #444;
  }

  .slider {
    position: relative;
    width: 136px;
    height: 4px;
    margin-left: 8px;
    background: #b5b5b5;
  }

  .slider i {
    position: absolute;
    left: 68px;
    top: -9px;
    width: 8px;
    height: 24px;
    background: #777;
  }

  .zoomval {
    margin-left: 54px;
    font: 22px "Noto Sans", sans-serif;
    color: #444;
    white-space: nowrap;
  }

  .url {
    position: absolute;
    left: 1171px;
    top: 1002px;
    font: 59.7px/70px "Liberation Sans", sans-serif;
    color: #5a5af0;
    white-space: nowrap;
    opacity: .95;
  }

  .mark {
    position: absolute;
    width: 82px;
    height: 51px;
    color: #000;
  }

  .mark svg { display: block; overflow: visible; }

  .two {
    font: bold 19px "Liberation Serif", serif;
    fill: currentColor;
  }

  .cn {
    font: 700 13px "Noto Sans CJK SC", sans-serif;
    fill: currentColor;
    opacity: .7;
  }

  .m-title { left: 158px; top: 75px; }
  .m-share { left: 1810px; top: 72px; color: #1a7fe5; }
  .m-center { left: 917px; top: 515px; }
  .m-tab { left: 155px; top: 1020px; color: #1a7fe5; }
  .m-status { left: 1810px; top: 1021px; }
</style>
